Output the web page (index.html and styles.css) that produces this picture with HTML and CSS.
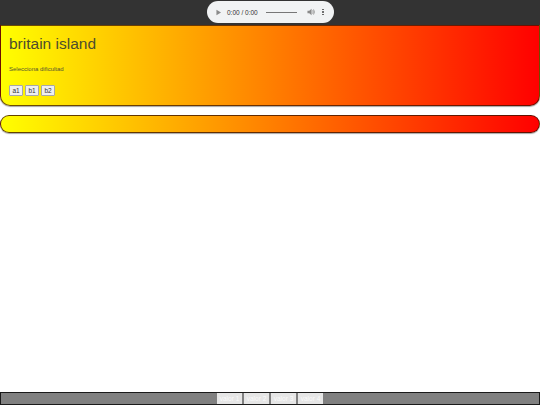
FILE: index.html
```html
<!DOCTYPE html>
<html>
<head>
<meta charset="utf-8">
<link rel="stylesheet" href="styles.css">
</head>
<body>
<div class="page">
  <header class="topbar">
    <div class="player">
      <svg class="play" width="6" height="7" viewBox="0 0 6 7"><path d="M0.5 0.5 L5.5 3.5 L0.5 6.5 Z" fill="#8a8a8a"/></svg>
      <span class="time">0:00 / 0:00</span>
      <span class="track"></span>
      <svg class="vol" width="9" height="8" viewBox="0 0 9 8"><path d="M0.5 2.5 H2.5 L5 0.5 V7.5 L2.5 5.5 H0.5 Z" fill="#8a8a8a"/><path d="M6.2 2.2 Q7.4 4 6.2 5.8" stroke="#8a8a8a" stroke-width="0.9" fill="none"/><path d="M7.2 1.2 Q9 4 7.2 6.8" stroke="#8a8a8a" stroke-width="0.9" fill="none"/></svg>
      <span class="dots"><i></i><i></i><i></i></span>
    </div>
  </header>
  <section class="card">
    <h1 class="title">britain island</h1>
    <p class="subtitle">Selecciona dificultad</p>
    <div class="levels">
      <button class="level">a1</button>
      <button class="level">b1</button>
      <button class="level">b2</button>
    </div>
  </section>
  <div class="progress"></div>
  <footer class="footer">
    <button class="val">valor 1</button>
    <button class="val">valor 2</button>
    <button class="val">valor 3</button>
    <button class="val">valor 4</button>
  </footer>
</div>
</body>
</html>
```
FILE: styles.css
```css
html, body {
  margin: 0;
  padding: 0;
  background: #fff;
  font-family: "Liberation Sans", Arial, sans-serif;
}
.page {
  display: flex;
  flex-direction: column;
  min-height: 405px;
}
.topbar {
  height: 25px;
  background: #333;
  display: flex;
  justify-content: center;
  align-items: flex-start;
}
.player {
  margin-top: 1px;
  width: 127px;
  height: 22px;
  box-sizing: border-box;
  background: #f1f3f4;
  border-radius: 11px;
  display: flex;
  align-items: center;
  padding: 0 10px 0 9px;
}
.play { margin-right: 6px; }
.time {
  font-size: 6.5px;
  color: #333;
  margin-right: 8px;
  white-space: nowrap;
}
.track {
  width: 34px;
  height: 1px;
  background: #777;
  margin-right: 10px;
}
.vol { margin-right: 7px; }
.dots {
  display: flex;
  flex-direction: column;
  gap: 1px;
}
.dots i {
  display: block;
  width: 1.6px;
  height: 1.6px;
  border-radius: 50%;
  background: #555;
}
.card {
  height: 81px;
  box-sizing: border-box;
  border: 1px solid rgba(60, 20, 0, 0.75);
  border-radius: 0 0 10px 10px;
  background: linear-gradient(to right, #ffff00, #ff0000);
  box-shadow: 0 1px 1px rgba(0, 0, 0, 0.35);
  padding: 9px 9px 0 8px;
  color: #4a4a30;
}
.title {
  margin: 0;
  font-weight: normal;
  font-size: 15.5px;
  line-height: 18px;
  color: #4d4d2e;
}
.subtitle {
  margin: 12px 0 0 0;
  font-size: 6px;
  line-height: 8px;
  color: #555530;
}
.levels {
  display: flex;
  gap: 2px;
  margin-top: 12px;
}
.level {
  font-family: "Liberation Sans", Arial, sans-serif;
  font-size: 6.5px;
  height: 11px;
  padding: 0;
  width: 14px;
  background: #efefef;
  border: 1px solid #a8a8a8;
  border-radius: 1px;
  color: #333;
  line-height: 9px;
}
.progress {
  margin-top: 9px;
  height: 18px;
  box-sizing: border-box;
  border: 1px solid rgba(60, 20, 0, 0.8);
  border-radius: 9px;
  background: linear-gradient(to right, #ffff00, #ff0000);
  box-shadow: 0 1px 1px rgba(0, 0, 0, 0.35);
}
.footer {
  margin-top: auto;
  height: 13px;
  box-sizing: border-box;
  background: #808080;
  border: 1px solid #1a1a1a;
  display: flex;
  justify-content: center;
  align-items: center;
  gap: 2px;
}
.val {
  font-family: "Liberation Sans", Arial, sans-serif;
  font-size: 6.5px;
  height: 11px;
  width: 25px;
  padding: 0;
  border: none;
  background: #e6e6e6;
  color: #fafafa;
  line-height: 11px;
}
```
